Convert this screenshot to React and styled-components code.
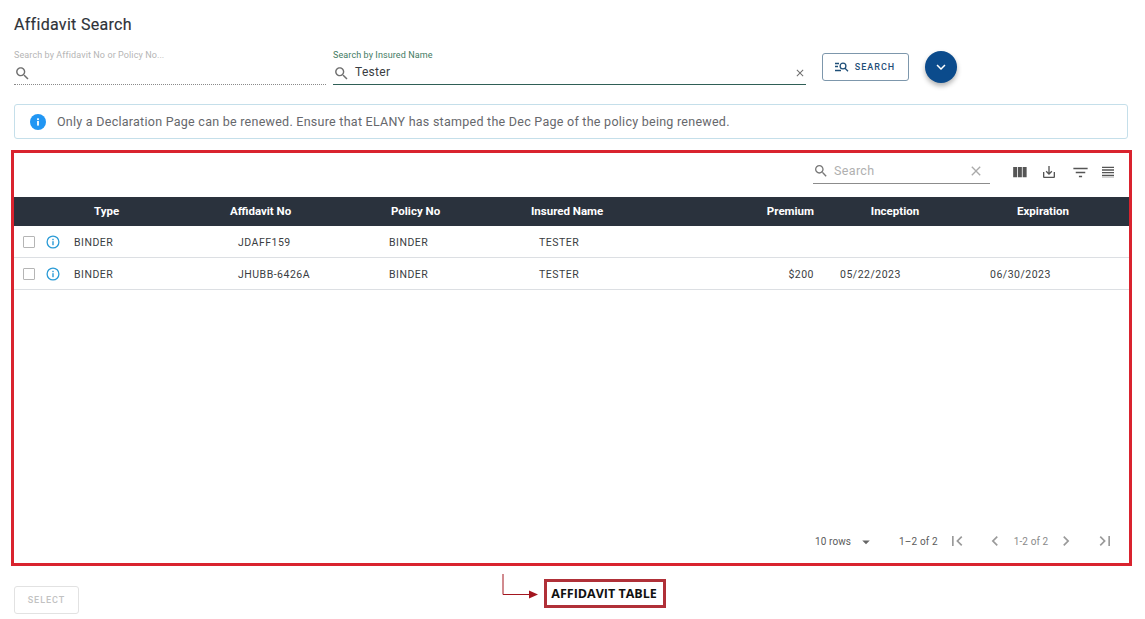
import React from "react";
import styled, { createGlobalStyle } from "styled-components";

const Global = createGlobalStyle`
  html, body { margin: 0; padding: 0; background: #fff; }
  body { font-family: Roboto, "Liberation Sans", sans-serif; color: #2b2f36; }
  * { box-sizing: border-box; }
`;

const Page = styled.div`
  width: 1145px;
  height: 619px;
  overflow: hidden;
  padding: 15px 0 0 14px;
  display: flex;
  flex-direction: column;
`;

const Title = styled.h1`
  margin: 0;
  font-size: 16px;
  line-height: 19px;
  font-weight: 400;
  letter-spacing: 0.3px;
  color: #2e3238;
  -webkit-text-stroke: 0.15px #2e3238;
`;

const SearchRow = styled.div`
  display: flex;
  align-items: flex-start;
  margin-top: 14px;
  height: 56px;
`;

const Field = styled.div`
  width: ${(p) => p.$width}px;
  margin-right: ${(p) => p.$gap}px;
  height: 37px;
  display: flex;
  flex-direction: column;
`;

const FieldLabel = styled.label`
  font-size: 9px;
  line-height: 12px;
  height: 12px;
  margin: 1px 0 1px;
  letter-spacing: 0.1px;
  color: ${(p) => (p.$active ? "#3f7a62" : "#b5b5b5")};
`;

const FieldBody = styled.div`
  height: 23px;
  display: flex;
  align-items: center;
  color: #6f6f6f;
  border-bottom: ${(p) => (p.$active ? "1px solid #2f5f56" : "1px dotted #8a8a8a")};
  svg { flex: none; }
`;

const FieldValue = styled.span`
  flex: 1;
  font-size: 12px;
  letter-spacing: 0.3px;
  margin-left: 5px;
  margin-top: -3px;
  color: #3a3d42;
`;

const SearchButton = styled.button`
  width: 87px;
  height: 28px;
  margin: 5px 16px 0 0;
  border: 1px solid #7d97ac;
  border-radius: 3px;
  background: #fff;
  color: #1f4f78;
  font: 500 9px Roboto, sans-serif;
  letter-spacing: 1px;
  display: flex;
  align-items: center;
  justify-content: center;
  gap: 6px;
  padding: 0 1px 0 0;
`;

const Fab = styled.button`
  width: 32px;
  height: 32px;
  margin-top: 3px;
  border: 0;
  border-radius: 50%;
  background: #0b4b8c;
  color: #fff;
  padding: 0;
  display: flex;
  align-items: center;
  justify-content: center;
  box-shadow: 0 3px 5px rgba(0, 0, 0, 0.3);
`;

const Alert = styled.div`
  width: 1114px;
  height: 35px;
  border: 1px solid #c5dfea;
  border-radius: 3px;
  display: flex;
  align-items: center;
  padding-left: 15px;
  gap: 11px;
  font-size: 12.5px;
  letter-spacing: 0.26px;
  color: #66686c;
`;

const TableFrame = styled.section`
  width: 1121px;
  height: 416px;
  margin: 11px 0 0 -3px;
  border: 3px solid #d9232e;
  display: flex;
  flex-direction: column;
`;

const Toolbar = styled.div`
  height: 44px;
  flex: none;
  display: flex;
  align-items: flex-start;
  justify-content: flex-end;
  padding-top: 7px;
  padding-right: 13px;
  color: #555;
`;

const ToolSearch = styled.div`
  width: 177px;
  height: 24px;
  border-bottom: 1px solid #8c8c8c;
  display: flex;
  align-items: center;
  margin-right: 20px;
  color: #777;
  padding: 0 6px 2px 0;
`;

const ToolPlaceholder = styled.span`
  flex: 1;
  margin-left: 5px;
  font-size: 12.5px;
  letter-spacing: 0.35px;
  color: #b0b0b0;
`;

const ClearMark = styled.span`
  display: flex;
  color: #aaa;
`;

const ToolIcons = styled.div`
  display: flex;
  align-items: center;
  height: 24px;
  color: #555;
  svg { display: block; }
`;

const ToolIcon = styled.span`
  display: flex;
  margin-left: ${(p) => p.$ml}px;
`;

const HeadRow = styled.div`
  height: 29px;
  flex: none;
  background: #2a323d;
  color: #fff;
  display: grid;
  grid-template-columns: 136px 161px 140px 200px 83px 162px 134px;
  align-items: center;
  padding: 0 0 1px 80px;
  font-size: 11.5px;
  font-weight: 700;
`;

const HeadCell = styled.div`
  text-align: ${(p) => p.$align || "left"};
`;

const Row = styled.div`
  height: 32px;
  flex: none;
  border-bottom: 1px solid #dcdfe3;
  display: grid;
  grid-template-columns: 60px 164px 151px 150px 125px 150px 26px 150px 1fr;
  align-items: center;
  padding-top: 1px;
  font-size: 10.5px;
  letter-spacing: 0.5px;
  color: #3a3d42;
`;

const RowTools = styled.div`
  display: flex;
  align-items: center;
  padding-left: 9px;
  gap: 11px;
`;

const Check = styled.span`
  width: 12px;
  height: 12px;
  border: 1px solid #b5b5b5;
  border-radius: 1px;
  background: #fff;
`;

const Cell = styled.div`
  text-align: ${(p) => p.$align || "left"};
`;

const Spacer = styled.div`
  flex: 1;
`;

const Footer = styled.div`
  height: 50px;
  flex: none;
  display: flex;
  align-items: center;
  padding: 6px 0 0 801px;
  margin-top: -1px;
  font-size: 10px;
  white-space: nowrap;
  color: #5b5b5b;
  > * { flex: none; }
`;

const Rows = styled.span`
  letter-spacing: 0.1px;
  width: 38px;
`;

const Caret = styled.span`
  margin: 2px 0 0 4px;
  color: #666;
  display: flex;
`;

const Range = styled.span`
  margin-left: 24px;
  letter-spacing: 0.15px;
`;

const PageBtn = styled.span`
  display: flex;
  margin-left: ${(p) => p.$ml}px;
  color: #9a9a9a;
`;

const PageText = styled.span`
  margin-left: 9px;
  color: #8a8a8a;
  letter-spacing: 0.1px;
`;

const BottomRow = styled.div`
  display: flex;
  align-items: flex-start;
  height: 48px;
`;

const SelectButton = styled.button`
  width: 65px;
  height: 28px;
  margin: 20px 423px 0 0;
  border: 1px solid #e2e2e2;
  border-radius: 3px;
  background: #fff;
  color: #c2c2c2;
  font: 500 9px Roboto, sans-serif;
  letter-spacing: 1px;
  padding: 0;
`;

const Arrow = styled.svg`
  display: block;
  margin-top: 8px;
  flex: none;
`;

const Callout = styled.div`
  width: 122px;
  height: 29px;
  margin: 13px 0 0 5px;
  border: 3px solid #b03038;
  padding-right: 2px;
  display: flex;
  align-items: center;
  justify-content: center;
  font-family: "Open Sans", sans-serif;
  font-weight: 700;
  font-size: 12.5px;
  color: #111;
  white-space: nowrap;
`;

const Icon = ({ d, size = 16, children }) => (
  <svg width={size} height={size} viewBox="0 0 24 24" fill="currentColor">
    {d && <path d={d} />}
    {children}
  </svg>
);

const P = {
  search: "M15.5 14h-.79l-.28-.27C15.41 12.59 16 11.11 16 9.5 16 5.91 13.09 3 9.5 3S3 5.91 3 9.5 5.91 16 9.5 16c1.61 0 3.09-.59 4.23-1.57l.27.28v.79l5 4.99L20.49 19l-4.99-5zm-6 0C7.01 14 5 11.99 5 9.5S7.01 5 9.5 5 14 7.01 14 9.5 11.99 14 9.5 14z",
  close: "M19 6.41L17.59 5 12 10.59 6.41 5 5 6.41 10.59 12 5 17.59 6.41 19 12 13.41 17.59 19 19 17.59 13.41 12z",
  columns: "M10 18h5V5h-5v13zm-6 0h5V5H4v13zM16 5v13h5V5h-5z",
  save: "M19 12v7H5v-7H3v7c0 1.1.9 2 2 2h14c1.1 0 2-.9 2-2v-7h-2zm-6 .67l2.59-2.58L17 11.5l-5 5-5-5 1.41-1.41L11 12.67V3h2z",
  filter: "M10 18h4v-2h-4v2zM3 6v2h18V6H3zm3 7h12v-2H6v2z",
  density: "M3 4h18v2H3zM3 8h18v2H3zM3 12h18v2H3zM3 16h18v2H3zM3 20h18v-1H3z",
  first: "M18.41 16.59L13.82 12l4.59-4.59L17 6l-6 6 6 6zM6 6h2v12H6z",
  last: "M5.59 7.41L10.18 12l-4.59 4.59L7 18l6-6-6-6zM16 6h2v12h-2z",
  prev: "M15.41 7.41L14 6l-6 6 6 6 1.41-1.41L10.83 12z",
  next: "M10 6L8.59 7.41 13.17 12l-4.58 4.59L10 18l6-6z",
  expand: "M16.59 8.59L12 13.17 7.41 8.59 6 10l6 6 6-6z",
  drop: "M7 10l5 5 5-5z",
};

const InfoOutline = () => (
  <svg width="14" height="14" viewBox="0 0 14 14" fill="none" stroke="#2a9bd6">
    <circle cx="7" cy="7" r="5.9" strokeWidth="1.3" />
    <rect x="6.3" y="6.2" width="1.4" height="4" fill="#2a9bd6" stroke="none" />
    <rect x="6.3" y="3.8" width="1.4" height="1.4" fill="#2a9bd6" stroke="none" />
  </svg>
);

const InfoFilled = () => (
  <svg width="16" height="16" viewBox="0 0 16 16">
    <circle cx="8" cy="8" r="8" fill="#2196f3" />
    <rect x="7.1" y="7" width="1.8" height="4.6" fill="#fff" />
    <rect x="7.1" y="4.3" width="1.8" height="1.8" fill="#fff" />
  </svg>
);

const SearchListIcon = () => (
  <svg width="14" height="12" viewBox="0 0 14 12" fill="none" stroke="currentColor" strokeWidth="1.3">
    <path d="M0 2.5h4M0 5.5h3M0 9.5h6" />
    <circle cx="8" cy="5" r="2.9" />
    <path d="M10 7.2l3 3" />
  </svg>
);

const rows = [
  { type: "BINDER", aff: "JDAFF159", pol: "BINDER", name: "TESTER", prem: "", inc: "", exp: "" },
  { type: "BINDER", aff: "JHUBB-6426A", pol: "BINDER", name: "TESTER", prem: "$200", inc: "05/22/2023", exp: "06/30/2023" },
];

export default function App() {
  return (
    <Page>
      <Global />
      <Title>Affidavit Search</Title>
      <SearchRow>
        <Field $width={312} $gap={7}>
          <FieldLabel>Search by Affidavit No or Policy No...</FieldLabel>
          <FieldBody>
            <Icon d={P.search} size={17} />
          </FieldBody>
        </Field>
        <Field $width={473} $gap={16}>
          <FieldLabel $active>Search by Insured Name</FieldLabel>
          <FieldBody $active>
            <Icon d={P.search} size={17} />
            <FieldValue>Tester</FieldValue>
            <Icon d={P.close} size={12} />
          </FieldBody>
        </Field>
        <SearchButton>
          <SearchListIcon />
          SEARCH
        </SearchButton>
        <Fab aria-label="expand">
          <Icon d={P.expand} size={18} />
        </Fab>
      </SearchRow>
      <Alert>
        <InfoFilled />
        Only a Declaration Page can be renewed. Ensure that ELANY has stamped the Dec Page of the policy being renewed.
      </Alert>
      <TableFrame>
        <Toolbar>
          <ToolSearch>
            <Icon d={P.search} size={16} />
            <ToolPlaceholder>Search</ToolPlaceholder>
            <ClearMark><Icon d={P.close} size={16} /></ClearMark>
          </ToolSearch>
          <ToolIcons>
            <ToolIcon $ml={0}><Icon d={P.columns} size={19} /></ToolIcon>
            <ToolIcon $ml={12}><Icon d={P.save} size={16} /></ToolIcon>
            <ToolIcon $ml={14}><Icon d={P.filter} size={19} /></ToolIcon>
            <ToolIcon $ml={10}><Icon d={P.density} size={16} /></ToolIcon>
          </ToolIcons>
        </Toolbar>
        <HeadRow>
          <HeadCell>Type</HeadCell>
          <HeadCell>Affidavit No</HeadCell>
          <HeadCell>Policy No</HeadCell>
          <HeadCell>Insured Name</HeadCell>
          <HeadCell $align="right">Premium</HeadCell>
          <HeadCell $align="center">Inception</HeadCell>
          <HeadCell $align="center">Expiration</HeadCell>
        </HeadRow>
        {rows.map((r) => (
          <Row key={r.aff}>
            <RowTools>
              <Check />
              <InfoOutline />
            </RowTools>
            <Cell>{r.type}</Cell>
            <Cell>{r.aff}</Cell>
            <Cell>{r.pol}</Cell>
            <Cell>{r.name}</Cell>
            <Cell $align="right">{r.prem}</Cell>
            <span />
            <Cell>{r.inc}</Cell>
            <Cell>{r.exp}</Cell>
          </Row>
        ))}
        <Spacer />
        <Footer>
          <Rows>10 rows</Rows>
          <Caret><Icon d={P.drop} size={18} /></Caret>
          <Range>1–2 of 2</Range>
          <PageBtn $ml={9}><Icon d={P.first} size={20} /></PageBtn>
          <PageBtn $ml={18}><Icon d={P.prev} size={20} /></PageBtn>
          <PageText>1-2 of 2</PageText>
          <PageBtn $ml={8}><Icon d={P.next} size={20} /></PageBtn>
          <PageBtn $ml={19}><Icon d={P.last} size={20} /></PageBtn>
        </Footer>
      </TableFrame>
      <BottomRow>
        <SelectButton disabled>SELECT</SelectButton>
        <Arrow width="37" height="30" viewBox="0 0 37 30">
          <path d="M1 0V20.5H27" fill="none" stroke="#a3161f" strokeWidth="1" />
          <path d="M27 16.5L36 20.5L27 24.5z" fill="#a3161f" />
        </Arrow>
        <Callout>AFFIDAVIT TABLE</Callout>
      </BottomRow>
    </Page>
  );
}
